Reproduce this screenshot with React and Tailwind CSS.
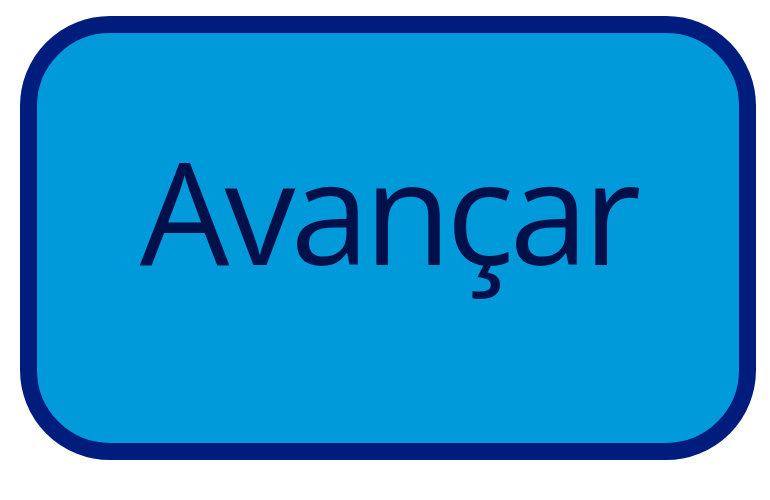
export default function App() {
  return (
    <div className="w-[770px] h-[500px] bg-white pt-4 pl-5">
      <button className="w-[736px] h-[444px] rounded-[90px] border-[17px] border-[#001c7c] bg-[#0099da] flex items-center justify-center pb-[56px]">
        <span
          className="text-[142px] leading-none text-[#00104a] tracking-[-5px]"
          style={{ fontFamily: '"Open Sans", sans-serif' }}
        >
          Avançar
        </span>
      </button>
    </div>
  );
}
